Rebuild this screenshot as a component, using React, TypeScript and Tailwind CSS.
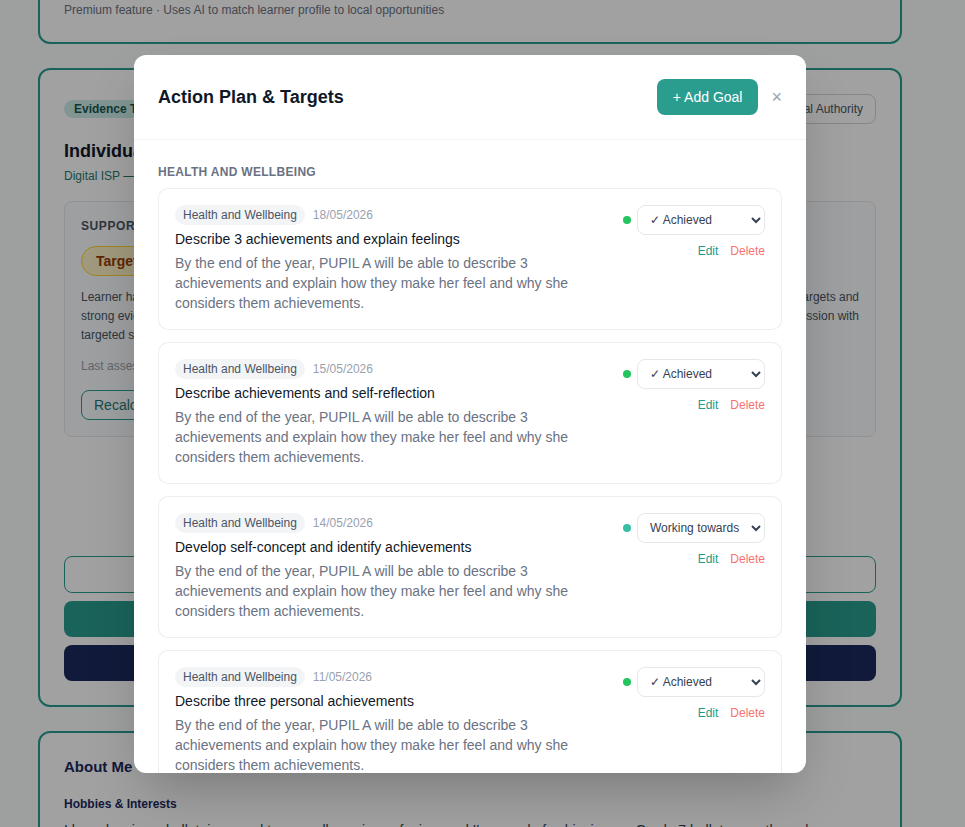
import React from "react";

type Goal = {
  date: string;
  title: string;
  status: "achieved" | "working";
};

const goals: Goal[] = [
  { date: "18/05/2026", title: "Describe 3 achievements and explain feelings", status: "achieved" },
  { date: "15/05/2026", title: "Describe achievements and self-reflection", status: "achieved" },
  { date: "14/05/2026", title: "Develop self-concept and identify achievements", status: "working" },
  { date: "11/05/2026", title: "Describe three personal achievements", status: "achieved" },
  { date: "08/05/2026", title: "Recognise and name personal strengths", status: "working" },
];

const desc =
  "By the end of the year, PUPIL A will be able to describe 3 achievements and explain how they make her feel and why she considers them achievements.";

function GoalCard({ g }: { g: Goal }) {
  return (
    <div className="flex gap-4 rounded-[10px] border border-gray-200/70 bg-white p-4">
      <div className="min-w-0 flex-1">
        <div className="flex items-center gap-2">
          <span className="rounded-full bg-gray-100 px-2 py-[2px] text-xs leading-4 text-gray-600">
            Health and Wellbeing
          </span>
          <span className="text-xs leading-4 text-gray-400">{g.date}</span>
        </div>
        <div className="mt-1 text-sm leading-5 text-gray-900">{g.title}</div>
        <p className="mt-1 text-sm leading-5 text-gray-500">{desc}</p>
      </div>
      <div className="flex w-[143px] shrink-0 flex-col items-end">
        <div className="flex items-center gap-1.5">
          <span
            className={
              g.status === "achieved"
                ? "h-2 w-2 rounded-full bg-[#22c55e]"
                : "h-2 w-2 rounded-full bg-[#36bfa5]"
            }
          />
          <select
            defaultValue={g.status}
            className="h-[30px] w-[128px] rounded-lg border border-gray-200 bg-white pl-2 pr-1 text-xs text-gray-700"
          >
            <option value="achieved">✓ Achieved</option>
            <option value="working">Working towards</option>
            <option value="not">Not started</option>
          </select>
        </div>
        <div className="mt-2 flex gap-3 text-xs leading-4">
          <span className="text-[#229a8c]">Edit</span>
          <span className="text-[#f87171]">Delete</span>
        </div>
      </div>
    </div>
  );
}

export default function App() {
  return (
    <div className="relative h-[827px] w-full overflow-hidden bg-[#fbfcfc] font-['Liberation_Sans',Arial,sans-serif]">
      {/* Background page (scrolled) */}
      <div className="-mt-[48px] flex w-[940px] flex-col gap-6 px-[38px]">
        {/* Card 1 */}
        <div className="rounded-xl border-2 border-[#2a9d8f] bg-white px-6 pb-6 pt-6">
          <p className="text-sm leading-5 text-gray-700">
            Find local clubs, activities and support services that match this learner's interests, strengths and goals.
          </p>
          <p className="mt-1 text-xs leading-4 text-gray-500">
            Premium feature · Uses AI to match learner profile to local opportunities
          </p>
        </div>

        {/* Card 2 */}
        <div className="rounded-xl border-2 border-[#2a9d8f] bg-white p-6">
          <div className="flex items-center justify-between">
            <span className="rounded-full bg-[#cdeee9] px-2.5 py-[1px] text-xs font-bold leading-4 text-[#17594f]">
              Evidence Tracker
            </span>
            <span className="flex h-[30px] items-center rounded-lg border border-gray-300 px-3 text-xs text-gray-600">
              Share with Local Authority
            </span>
          </div>
          <h2 className="mt-[13px] text-lg font-bold leading-7 text-gray-900">Individual Support Plan</h2>
          <p className="mt-[3px] text-xs leading-4 text-[#1f7a6f]">
            Digital ISP — automatically built from evidence, targets and assessments
          </p>
          <div className="mt-[17px] rounded-lg border border-gray-200 bg-gray-50/60 p-4">
            <div className="text-xs font-bold uppercase leading-4 tracking-wider text-gray-600">
              Support Level
            </div>
            <div className="mt-3 inline-flex rounded-full border border-amber-300 bg-amber-100 px-3.5 py-1 text-sm font-bold leading-5 text-amber-800">
              Targeted Support
            </div>
            <div className="mt-3 text-xs leading-[19px] text-gray-600">
              <div className="flex justify-between">
                <span>Learner has made good progress across the plan period, with</span>
                <span>the majority of outcomes on track against agreed targets and</span>
              </div>
              <div className="flex justify-between">
                <span>strong evidence of engagement in most areas. Continued</span>
                <span>monitoring is recommended to support progression with</span>
              </div>
              <div>targeted strategies in the areas identified below.</div>
            </div>
            <div className="mt-[13px] text-xs leading-4 text-gray-400">Last assessed: 18/05/2026</div>
            <div className="mt-4 inline-flex h-[30px] items-center rounded-lg border border-[#2a9d8f] px-3 text-sm text-[#1f7a6f]">
              Recalculate Support Level
            </div>
          </div>
          <div className="mt-[119px] flex flex-col gap-2">
            <div className="h-[37px] rounded-lg border border-[#2a9d8f]" />
            <div className="h-9 rounded-lg bg-[#2a9d8f]" />
            <div className="h-9 rounded-lg bg-[#1b2a5e]" />
          </div>
        </div>

        {/* Card 3 */}
        <div className="rounded-xl border-2 border-[#2a9d8f] bg-white p-6">
          <h3 className="text-[15px] font-bold leading-5 text-[#1b2a5e]">About Me</h3>
          <h4 className="mt-[19px] text-xs font-bold leading-4 text-[#1b2a5e]">Hobbies &amp; Interests</h4>
          <p className="mt-2 whitespace-nowrap text-sm leading-5 text-gray-700">
            I love dancing – ballet, jazz, and tap are all passions of mine, and I'm proud of achieving my Grade 7 ballet exam through
          </p>
        </div>
      </div>

      {/* Overlay + modal */}
      <div className="absolute inset-0 flex items-center justify-center bg-black/[0.37] pr-[25px]">
        <div className="flex h-[718px] w-[672px] flex-col overflow-hidden rounded-xl bg-white shadow-2xl">
          <div className="flex items-center justify-between border-b border-gray-100 px-6 py-6">
            <h2 className="text-lg font-bold leading-7 text-gray-900">Action Plan &amp; Targets</h2>
            <div className="flex items-center gap-[13px]">
              <button className="h-9 rounded-lg bg-[#2a9d8f] px-4 text-sm text-white">+ Add Goal</button>
              <span className="text-lg leading-none text-gray-400">×</span>
            </div>
          </div>
          <div className="flex-1 overflow-hidden px-6 pt-6">
            <div className="mb-2 text-xs font-bold uppercase leading-4 tracking-wide text-gray-500">
              Health and Wellbeing
            </div>
            <div className="flex flex-col gap-3">
              {goals.map((g, i) => (
                <GoalCard key={i} g={g} />
              ))}
            </div>
          </div>
        </div>
      </div>
    </div>
  );
}
